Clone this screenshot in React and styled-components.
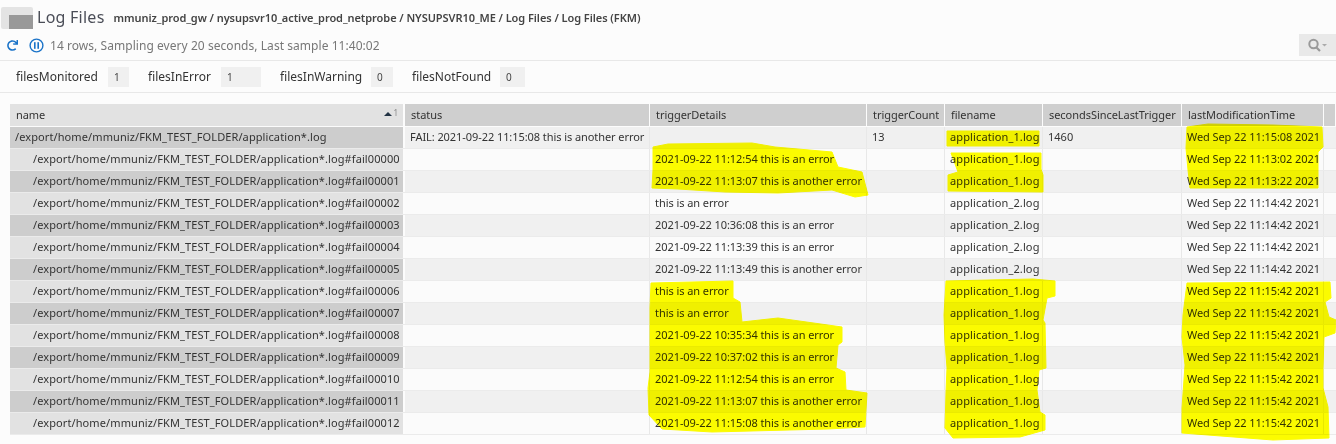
import React from "react";
import styled, { createGlobalStyle } from "styled-components";
import { FaRedo } from "react-icons/fa";

const GlobalStyle = createGlobalStyle`
  html, body {
    margin: 0;
    padding: 0;
    background: #fcfcfc;
    font-family: "Noto Sans", "Open Sans", sans-serif;
    color: #333;
    overflow: hidden;
  }
`;

const Page = styled.div`
  position: relative;
  width: 1336px;
  height: 444px;
  overflow: hidden;
`;

const TitleRow = styled.div`
  display: flex;
  align-items: center;
  height: 34px;
  padding-left: 1px;
`;

const FolderIcon = styled.div`
  align-self: flex-start;
  width: 32px;
  height: 22px;
  margin-top: 7px;
  background: #e4e4e4;
  border-radius: 2px;
  display: flex;
  justify-content: flex-end;
  align-items: flex-end;

  &::after {
    content: "";
    width: 24px;
    height: 14px;
    background: #999;
  }
`;

const Title = styled.div`
  font-size: 16px;
  letter-spacing: 0.25px;
  color: #4a4d57;
  margin-left: 4px;
`;

const Crumbs = styled.div`
  font-size: 11px;
  font-weight: 600;
  letter-spacing: -0.06px;
  color: #444;
  margin-left: 9px;
  margin-top: 1px;
`;

const StatusRow = styled.div`
  display: flex;
  align-items: center;
  height: 22px;
  padding: 0 0 4px 7px;
  border-bottom: 1px solid #e8e8e8;
`;

const PauseIcon = styled.svg`
  width: 15px;
  height: 15px;
  margin-left: 11px;
`;

const StatusText = styled.div`
  font-size: 12px;
  letter-spacing: 0.05px;
  color: #777;
  margin-left: 6px;
`;

const SearchButton = styled.div`
  margin-left: auto;
  width: 37px;
  height: 22px;
  background: #e9e9e9;
  display: flex;
  align-items: center;
  justify-content: center;
`;

const StatsRow = styled.div`
  display: flex;
  align-items: center;
  height: 31px;
  padding-left: 16px;
  border-bottom: 1px solid #e8e8e8;
`;

const StatLabel = styled.div`
  font-size: 12px;
  color: #333;
  width: ${({ $width }) => $width}px;
  white-space: nowrap;
`;

const StatValue = styled.div`
  width: ${({ $width }) => $width}px;
  height: 20px;
  line-height: 20px;
  box-sizing: border-box;
  padding-left: 6px;
  font-size: 10px;
  background: #f0f0f0;
  color: #444;
  margin-right: 19px;
`;

const Table = styled.div`
  margin: 11px 0 0 10px;
  display: flex;
  flex-direction: column;
`;

const HeaderRow = styled.div`
  display: grid;
  grid-template-columns: 395px 245px 217px 78px 98px 139px 142px 12px;
  height: 22px;
  margin-bottom: 1px;
`;

const HeaderCell = styled.div`
  position: relative;
  font-size: 11px;
  letter-spacing: -0.05px;
  line-height: 22px;
  padding-left: 6px;
  white-space: nowrap;
  overflow: hidden;
  color: #333;
  background: ${({ $light }) => ($light ? "#e2e2e2" : "#cfcfcf")};
  border-right: ${({ $light }) => ($light ? "2px" : "1px")} solid #fcfcfc;
`;

const SortMark = styled.span`
  position: absolute;
  right: 5px;
  top: 4px;
  display: flex;
  align-items: flex-start;
  gap: 1px;
  font-size: 8px;
  line-height: 9px;
  color: #888;

  &::before {
    content: "";
    margin-top: 4px;
    border-left: 4px solid transparent;
    border-right: 4px solid transparent;
    border-bottom: 4px solid #234;
  }
`;

const Row = styled.div`
  display: grid;
  grid-template-columns: 395px 245px 217px 78px 98px 139px 142px;
  height: 22px;
  background: ${({ $odd }) => ($odd ? "#fbfbfb" : "#f0f0f0")};
  border-bottom: 1px solid #ebebeb;
  box-sizing: border-box;
`;

const Cell = styled.div`
  font-size: 11px;
  letter-spacing: ${({ $spacing }) => $spacing}px;
  line-height: 20px;
  padding-left: 5px;
  white-space: nowrap;
  overflow: hidden;
  color: #333;
  border-right: 1px solid #e8e8e8;
`;

const NameCell = styled(Cell)`
  background: ${({ $odd }) => ($odd ? "#e2e2e2" : "#cdcdcd")};
  padding-left: ${({ $child }) => ($child ? "23px" : "5px")};
  border-right: 2px solid #fcfcfc;
`;

const Highlight = styled.svg`
  position: absolute;
  left: 0;
  top: 0;
  pointer-events: none;
  mix-blend-mode: multiply;
`;

const headers = [
  "name",
  "status",
  "triggerDetails",
  "triggerCount",
  "filename",
  "secondsSinceLastTrigger",
  "lastModificationTime",
  "",
];

const base = "/export/home/mmuniz/FKM_TEST_FOLDER/application*.log";

const rows = [
  [base, "FAIL: 2021-09-22 11:15:08 this is another error", "", "13", "application_1.log", "1460", "Wed Sep 22 11:15:08 2021"],
  [`${base}#fail00000`, "", "2021-09-22 11:12:54 this is an error", "", "application_1.log", "", "Wed Sep 22 11:13:02 2021"],
  [`${base}#fail00001`, "", "2021-09-22 11:13:07 this is another error", "", "application_1.log", "", "Wed Sep 22 11:13:22 2021"],
  [`${base}#fail00002`, "", "this is an error", "", "application_2.log", "", "Wed Sep 22 11:14:42 2021"],
  [`${base}#fail00003`, "", "2021-09-22 10:36:08 this is an error", "", "application_2.log", "", "Wed Sep 22 11:14:42 2021"],
  [`${base}#fail00004`, "", "2021-09-22 11:13:39 this is an error", "", "application_2.log", "", "Wed Sep 22 11:14:42 2021"],
  [`${base}#fail00005`, "", "2021-09-22 11:13:49 this is another error", "", "application_2.log", "", "Wed Sep 22 11:14:42 2021"],
  [`${base}#fail00006`, "", "this is an error", "", "application_1.log", "", "Wed Sep 22 11:15:42 2021"],
  [`${base}#fail00007`, "", "this is an error", "", "application_1.log", "", "Wed Sep 22 11:15:42 2021"],
  [`${base}#fail00008`, "", "2021-09-22 10:35:34 this is an error", "", "application_1.log", "", "Wed Sep 22 11:15:42 2021"],
  [`${base}#fail00009`, "", "2021-09-22 10:37:02 this is an error", "", "application_1.log", "", "Wed Sep 22 11:15:42 2021"],
  [`${base}#fail00010`, "", "2021-09-22 11:12:54 this is an error", "", "application_1.log", "", "Wed Sep 22 11:15:42 2021"],
  [`${base}#fail00011`, "", "2021-09-22 11:13:07 this is another error", "", "application_1.log", "", "Wed Sep 22 11:15:42 2021"],
  [`${base}#fail00012`, "", "2021-09-22 11:15:08 this is another error", "", "application_1.log", "", "Wed Sep 22 11:15:42 2021"],
];

// letter spacing per column, the reference text is hinted a bit differently
const spacing = [0.1, -0.07, -0.07, 0, 0.12, 0, -0.08];

// hand drawn marker strokes over the table
const marks = [
  "M653 147 L668 144 L752 143 L775 147 L832 152 L838 167 L862 172 L868 195 L855 197 L832 190 L778 193 L725 192 L678 189 L652 188 L653 170 Z",
  "M947 131 L1039 131 L1039 146 L947 146 Z",
  "M951 153 L1041 153 L1041 169 L1043 175 L1043 192 L948 191 L948 175 L958 172 Z",
  "M1187 127 L1208 124 L1273 125 L1322 127 L1323 147 L1318 152 L1318 188 L1190 188 L1188 170 L1186 148 Z",
  "M651 283 L733 281 L733 298 L740 302 L742 322 L778 318 L842 327 L842 342 L838 345 L836 368 L845 372 L846 390 L867 393 L865 427 L828 429 L712 432 L662 429 L649 415 L648 388 L650 372 L650 308 Z",
  "M946 281 L1033 279 L1055 281 L1055 296 L1047 298 L1043 320 L1045 323 L1046 368 L1039 370 L1037 390 L1040 412 L1045 415 L1045 430 L1020 437 L953 438 L945 428 L946 392 L947 368 L945 342 L944 315 Z",
  "M1187 283 L1330 282 L1331 298 L1325 302 L1329 317 L1336 320 L1335 333 L1324 337 L1323 368 L1323 388 L1328 407 L1329 438 L1273 440 L1182 433 L1182 408 L1185 365 L1182 337 L1183 315 Z",
];

const App = () => (
  <Page>
    <GlobalStyle />
    <TitleRow>
      <FolderIcon />
      <Title>Log Files</Title>
      <Crumbs>mmuniz_prod_gw / nysupsvr10_active_prod_netprobe / NYSUPSVR10_ME / Log Files / Log Files (FKM)</Crumbs>
    </TitleRow>
    <StatusRow>
      <FaRedo size={11} color="#1a73c8" />
      <PauseIcon viewBox="0 0 15 15">
        <circle cx="7.5" cy="7.5" r="6.4" fill="none" stroke="#1a73c8" strokeWidth="1.4" />
        <rect x="5" y="4.2" width="1.6" height="6.6" fill="#1a73c8" />
        <rect x="8.4" y="4.2" width="1.6" height="6.6" fill="#1a73c8" />
      </PauseIcon>
      <StatusText>14 rows, Sampling every 20 seconds, Last sample 11:40:02</StatusText>
      <SearchButton>
        <svg width="22" height="14" viewBox="0 0 22 14">
          <circle cx="6.5" cy="6" r="4.2" fill="none" stroke="#999" strokeWidth="2" />
          <path d="M9.5 9.5 L13 13" stroke="#999" strokeWidth="2.2" />
          <path d="M15 6 L20 6 L17.5 8.5 Z" fill="#aaa" />
        </svg>
      </SearchButton>
    </StatusRow>
    <StatsRow>
      <StatLabel $width={92}>filesMonitored</StatLabel>
      <StatValue $width={21}>1</StatValue>
      <StatLabel $width={73}>filesInError</StatLabel>
      <StatValue $width={40}>1</StatValue>
      <StatLabel $width={91}>filesInWarning</StatLabel>
      <StatValue $width={22}>0</StatValue>
      <StatLabel $width={88}>filesNotFound</StatLabel>
      <StatValue $width={25}>0</StatValue>
    </StatsRow>
    <Table>
      <HeaderRow>
        {headers.map((header, i) => (
          <HeaderCell key={i} $light={i === 0}>
            {header}
            {i === 0 && <SortMark>1</SortMark>}
          </HeaderCell>
        ))}
      </HeaderRow>
      {rows.map((row, r) => (
        <Row key={r} $odd={r % 2 === 1}>
          {row.map((value, c) =>
            c === 0 ? (
              <NameCell key={c} $spacing={spacing[c]} $odd={r % 2 === 1} $child={r > 0}>
                {value}
              </NameCell>
            ) : (
              <Cell key={c} $spacing={spacing[c]}>
                {value}
              </Cell>
            )
          )}
        </Row>
      ))}
    </Table>
    <Highlight width="1336" height="444" viewBox="0 0 1336 444">
      {marks.map((d, i) => (
        <path key={i} d={d} fill="#ffff00" stroke="#ffff00" strokeWidth="1" strokeLinejoin="round" />
      ))}
    </Highlight>
  </Page>
);

export default App;
